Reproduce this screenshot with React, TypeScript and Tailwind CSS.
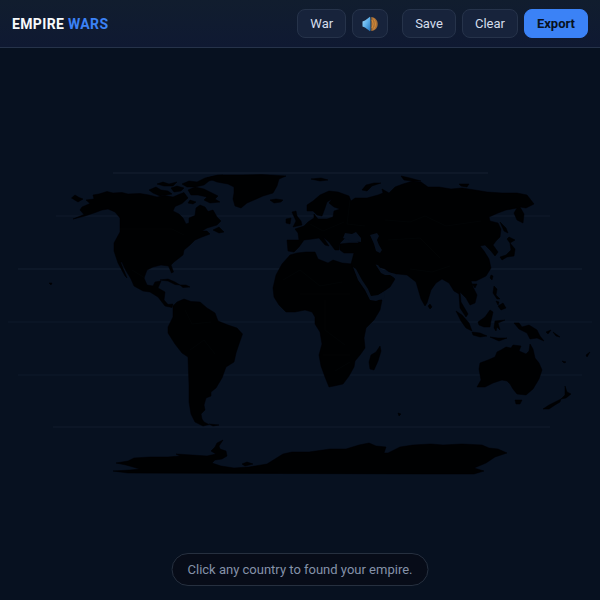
import type { ReactNode } from "react";

const land: string[] = [
  // North and Central America
  "M93 195L99 194 107 191.500 113 193 122 192.500 128 194 140 193.500 149 195 157 197 165 195.500 173 197 180 194 184 192.500 188 198 182 203.500 175 206.500 173 211 179 214 183 218 186 224 189 223 189 218 195 215.500 196 208 200 205 205 207 208 211.500 213 210 217 217 221 221 217 225 207 228 202 231 207 231 210 234 202 237 195 240 190 245 184 250 183 255 174 262 171 265 173.500 272 171.500 273 168.500 266 161 265 153 267 147 270 144 278 147 285 153 286 155 282 161 281 158 288 165 292 164 300 168 304.500 173 304 172 307.500 165 306 158 297 150 292 143 291 134 286 131 279 125 269 122 262 120.500 262 127 278 125 276 118 263 114 251 114 243 120 232 120 218 115 212 108 209 102 210 94 213 85 216 73 219 84 214.500 80 210 82 207 90 203.500 86 200 94 199Z",
  "M71.500 198L75 195 79 197.500 83 199 78 202Z",
  // Canadian Arctic
  "M149 190L156 187 161 190 168 191 172 194 160 196 153 193Z",
  "M157 184L163 182 169 184 177 182 173 186 164 186Z",
  "M171 188L177 186 184 188 181 191 174 192Z",
  "M182 184L189 181 197 182 205 178 214 176 223 175 219 178 209 181 204 185 195 187 187 187Z",
  "M188 190L195 187 204 189 210 192 218 196 215 199 220 202 210 203 204 200 207 197 198 195 191 195Z",
  "M190 200L196 202 193 204 188 203Z",
  "M213 230L219 227 224 232 219 233Z",
  // Greenland and Iceland
  "M207 178L218 175 242 175 262 174.500 286 176 279 179 277 186 273 193 263 196 254 200 247 203 241 208 235 206 233 199 234 193 234 187 228 184 217 182Z",
  "M270 200L276 199 283 200 281 202 274 203Z",
  // Caribbean
  "M160 280L168 279 175 282 180 285 175 284.500 168 281Z",
  "M180 285L186 285 190 287 183 287.500Z",
  // South America
  "M173 306L177 302 184 299 191 301.500 200 302 207 308 215 313 218 321 228 325 237 328 242.500 334 239 344 236 353 234 362 226 367 222 378 216 388 211 392 211 396 206 398 204 405 205 410 201 414 202 419 204 422 209 424.500 203 426 195 422 191 414 189 402 189 385 188 357 182 353 175 344 168 333 168 327 173 317Z",
  "M209 424L219 425 213 426Z",
  // Africa
  "M290 255L297 253 306 252 315 252 318 259 328 263 333 260 342 263 352 264 355 272 360 282 367 292 371 299 382 300 380 310 374 320 366 328 364 338 365 348 360 355 355 361 354 367 349 376 343 384 334 386 329 387 325 377 321 366 319 355 322 344 320 332 315 324 315 317 312 312 305 310 295 312 286 312 279 305 274 297 273 288 276 275 282 264Z",
  "M380 346L381 351 378 361 374 370 370 369 369 362 371 355 376 352Z",
  // Europe and Asia
  "M287 240L299 240 298 233 295 229 304 226 308 222 314 218 314 214 318 219 327 219 333 217 334 211 340 209 334 207 329 203 332 199 327 202 325 208 322 216 317 215 313 211 307 211 307 205 313 201 320 195 329 191 338 192 349 196 351 201 355 198 367 198 378 195 383 193 382 189 389 193 395 187 403 184 413 181 421 182 428 187 439 187 451 189 462 188 475 190 487 192 502 193 517 193 527 195 534 204 526 208 520 207 524 214 523 223 517 220 514 213 517 208 506 210 498 213 489 217 490 221 498 223 501 229 500 237 496 241 493 245 498 252 495 256 491 251 485 245 480 246 484 251 489 259 491 268 486 276 476 281 471 281 473 287 477 295 475 303 470 305 466 298 460 292 461 302 468 314 466 317 460 308 459 294 454 291 449 283 442 279 436 283 431 290 427 303 425 306 421 299 416 282 407 275 398 274 392 274 385 269 379 267 376 264 383 273 389 273 395 279 390 287 377 296 371 300 363 289 353 269 351 264 354 253 344 253 340 250 340 244 349 243 359 243 356 239 352 235 345 238 340 243 339 250 335 250 329 242 323 237 329 246 325 245 319 238 312 239 304 240 299 247 294 252 288 251Z",
  "M292 212L296 211 297 216 301 221 302 225 293 227 296 221Z",
  "M286 219L291 218 290 224 286 223Z",
  "M362 190L366 185 374 183 381 183 372 186 367 191Z",
  "M311 179L321 178 328 180 320 181Z",
  "M401 176L410 178 421 181 412 181 404 180Z",
  "M459 184L469 184 467 187 461 186Z",
  "M500 222L506 228 508 233 504 231Z",
  "M509 237L515 240 510 243 507 239Z",
  "M510 243L515 249 514 256 507 257 502 260 500 257 506 255 511 250Z",
  "M430 304L432 307 430 309 428 306Z",
  "M472 284L477 284 475 288Z",
  "M491 275L493 276 492 280 490 278Z",
  // South-east Asia and Pacific
  "M494 286L497 289 496 295 500 299 497 299 493 293Z",
  "M498 306L503 303 506 308 501 310Z",
  "M496 301L499 302 498 305Z",
  "M456 311L462 315 469 323 472 331 466 328 461 321Z",
  "M472 332L480 333 487 336 480 337 473 335Z",
  "M478 322L485 317 490 310 493 312 491 321 490 327 484 327 479 325Z",
  "M495 321L505 320 498 323 500 330 497 327 496 331 494 328Z",
  "M490 337L498 338 507 338 499 341Z",
  "M514 323L519 323 522 327 529 325 537 330 540 336 544 341 537 338 530 339 527 333 519 329Z",
  "M546 332L551 330 548 334Z",
  "M553 332L560 337 556 336Z",
  "M562 361L566 362 564 363Z",
  "M586 355L590 352 587 357Z",
  "M49 283L52 283 51 285Z",
  "M398 413L401 414 399 416Z",
  // Australia and New Zealand
  "M479 369L480 363 488 360 495 357 497 352 501 350 506 347 511 348 513 345 521 346 519 351 526 354 529 351 530 344 533 349 535 358 539 363 542 370 539 379 533 389 526 395 517 394 513 389 510 384 507 381 502 380 493 383 485 387 477 387 481 380Z",
  "M515 400L522 400 520 404 516 404Z",
  "M565 386L567 392 571 394 566 398 561 399 565 395Z",
  "M561 399L560 402 555 405 549 409 543 409 549 405Z",
  // Antarctica
  "M113 471L130 470 140 469 126 465 116 463 128 461 134 458 150 457 168 457 180 456 176 454 192 455 207 456 216 454 211 451 215 447 217 443 223 440 219 446 220 449 226 451 227 456 222 459 215 460 212 463 221 466 234 468 249 467 267 464 275 459 283 454 292 452 309 452 330 449 346 449 359 445 369 443 376 446 386 447 384 453 388 453 400 447 413 445 431 444 443 445 462 444 482 445 489 448 498 449 507 453 495 457 486 463 474 468 484 471 474 474 428 474 128 473Z",
  "M242 464L247 462 253 464 245 466Z",
];

const inlandWater: string[] = [
  // Black Sea
  "M343 238L345 233 352 234 356 232 361 238 361 242 351 241Z",
  // Caspian Sea
  "M370 235L377 233 379 236 377 240 379 245 382 250 380 253 376 251 374 244Z",
  // Persian Gulf and Gulf of Oman
  "M375.500 264.500L378 265 381 269 385 271 390 272.500 396 274 395 278 390 275 385 275 381 273Z",
  // Red Sea and Gulf of Aden
  "M353 267L356 269 362 280 368 289 371 296 378 295 385 291 384 298 376 301 370 300 365 290 358 280Z",
];

const borders =
  "M120 229H172L184 235M132 270L145 278M185 310L192 324 211 322M190 350L204 340 215 354M283 280L300 270 320 286 342 282M300 294H350M325 300V330L345 345M323 355H350M335 371L350 362M310 224L323 231 344 222M350 200L347 224 365 226M385 220L410 222 425 216 446 226 481 221M388 240L420 238 440 258M410 269L432 272 450 266";

const graticule = [
  { y: 173, x1: 113, x2: 488, color: "#172131" },
  { y: 216, x1: 56, x2: 550, color: "#101b2b" },
  { y: 269, x1: 18, x2: 582, color: "#142030" },
  { y: 322, x1: 8, x2: 592, color: "#0f1a2a" },
  { y: 375, x1: 18, x2: 582, color: "#0f1a2a" },
  { y: 427, x1: 53, x2: 550, color: "#121d2d" },
];

function WorldMap() {
  return (
    <svg viewBox="0 48 600 552" className="h-full w-full" role="img" aria-label="World map">
      {graticule.map((g) => (
        <path key={g.y} d={`M${g.x1} ${g.y}H${g.x2}`} stroke={g.color} strokeWidth="1.200" />
      ))}
      <g fill="#000102" stroke="#000102" strokeWidth="0.500" strokeLinejoin="round">
        {land.map((d) => (
          <path key={d} d={d} />
        ))}
      </g>
      {inlandWater.map((d) => (
        <path key={d} d={d} fill="#071120" />
      ))}
      <path d={borders} fill="none" stroke="#040608" strokeWidth="0.600" />
    </svg>
  );
}

function SpeakerIcon() {
  return (
    <svg viewBox="0 0 16 16" className="size-4" aria-hidden="true">
      <defs>
        <linearGradient id="cone" x1="0" x2="1" y1="0" y2="1">
          <stop offset="0" stopColor="#a5dcfa" />
          <stop offset="0.500" stopColor="#60b2ec" />
          <stop offset="1" stopColor="#2575bd" />
        </linearGradient>
      </defs>
      <path d="M0.500 5.500L3 4.500 8 0.800V15.200L3 11.500 0.500 10.500Z" fill="url(#cone)" />
      <path d="M8 0.800C9 0.800 9.300 4 9.300 8S9 15.200 8 15.200Z" fill="#315878" />
      <path d="M9.300 1C13.500 1.500 15.700 4.500 15.700 8S13.500 14.500 9.300 15Z" fill="#a87038" />
      <path d="M10 4Q12.500 8 10 12M11.500 2.500Q15.500 8 11.500 13.500" fill="none" stroke="#d58a35" />
    </svg>
  );
}

function ToolButton({ children }: { children: ReactNode }) {
  return (
    <button
      type="button"
      className="flex h-[29px] items-center justify-center rounded-lg border border-[#26334a] bg-[#17233b] px-3 text-[13px] text-[#d5deec]"
    >
      {children}
    </button>
  );
}

export default function App() {
  return (
    <div className="flex h-screen flex-col bg-[#071120] font-[Roboto,sans-serif]">
      <header className="flex h-12 shrink-0 items-center justify-between border-b border-[#26334a] bg-linear-to-b from-[#111d2e] to-[#0f1932] px-3">
        <h1 className="text-sm font-bold tracking-wide text-slate-50">
          EMPIRE <span className="text-[#3b82f6]">WARS</span>
        </h1>
        <div className="flex items-center gap-[14px]">
          <div className="flex gap-1.5">
            <ToolButton>War</ToolButton>
            <button
              type="button"
              aria-label="Toggle sound"
              className="flex h-[29px] w-9 items-center justify-center rounded-lg border border-[#26334a] bg-[#17233b]"
            >
              <SpeakerIcon />
            </button>
          </div>
          <div className="flex gap-1.5">
            <ToolButton>Save</ToolButton>
            <ToolButton>Clear</ToolButton>
            <button
              type="button"
              className="flex h-[29px] items-center rounded-lg border border-[#3b82f6] bg-[#3b82f6] px-3 text-[13px] font-bold text-[#071120]"
            >
              Export
            </button>
          </div>
        </div>
      </header>
      <main className="relative min-h-0 flex-1">
        <WorldMap />
        <p className="absolute bottom-[14px] left-1/2 -translate-x-1/2 rounded-full border border-[#26303f] bg-[#070c18] px-[15px] py-1.5 text-[13px] leading-[19px] whitespace-nowrap text-[#8592a9]">
          Click any country to found your empire.
        </p>
      </main>
    </div>
  );
}
